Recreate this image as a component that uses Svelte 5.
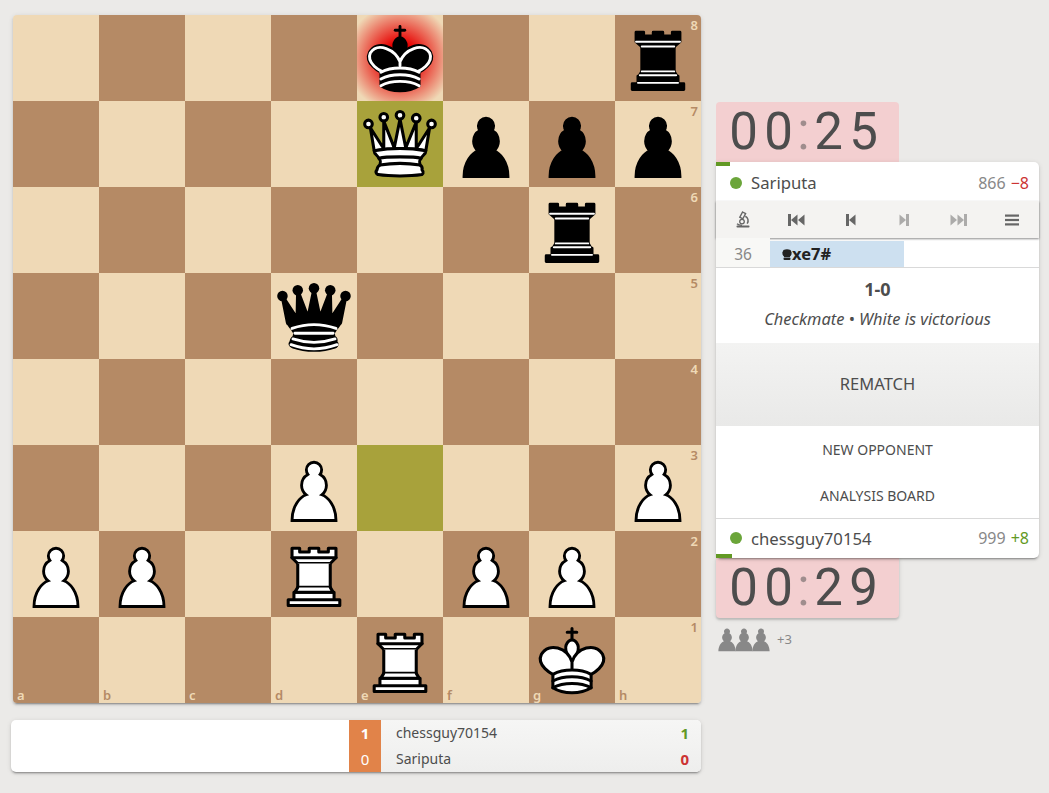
<script>
    const fen = "4k2r/4Qppp/6r1/3q4/8/3P3P/PP1R1PP1/4R1K1";
    const files = "abcdefgh";
    const lastMove = ["e7", "e3"];

    // expand the fen into a flat list of squares
    const squares = [];
    fen.split("/").forEach((row, r) => {
        let f = 0;
        for (const ch of row) {
            if (ch >= "1" && ch <= "8") {
                for (let i = 0; i < Number(ch); i++) {
                    squares.push({ r, f, name: files[f] + (8 - r), piece: null });
                    f++;
                }
            } else {
                squares.push({ r, f, name: files[f] + (8 - r), piece: ch });
                f++;
            }
        }
    });
</script>

{#snippet piece(p)}
    <svg class="piece" viewBox="0 0 45 45">
        {#if p === "P"}
            <path d="M22.5 9c-2.21 0-4 1.79-4 4 0 .89.29 1.71.78 2.38C17.33 16.5 16 18.59 16 21c0 2.03.94 3.84 2.41 5.03-3 1.06-7.41 5.55-7.41 13.47h23c0-7.92-4.41-12.41-7.41-13.47 1.47-1.19 2.41-3 2.41-5.03 0-2.41-1.33-4.5-3.28-5.62.49-.67.78-1.49.78-2.38 0-2.21-1.79-4-4-4z" fill="#fff" stroke="#000" stroke-width="1.5" stroke-linecap="round" />
        {:else if p === "p"}
            <path d="M22.5 9c-2.21 0-4 1.79-4 4 0 .89.29 1.71.78 2.38C17.33 16.5 16 18.59 16 21c0 2.03.94 3.84 2.41 5.03-3 1.06-7.41 5.55-7.41 13.47h23c0-7.92-4.41-12.41-7.41-13.47 1.47-1.19 2.41-3 2.41-5.03 0-2.41-1.33-4.5-3.28-5.62.49-.67.78-1.49.78-2.38 0-2.21-1.79-4-4-4z" fill="#000" stroke="#000" stroke-width="1.5" stroke-linecap="round" />
        {:else if p === "R"}
            <g fill="#fff" fill-rule="evenodd" stroke="#000" stroke-width="1.6" stroke-linecap="round" stroke-linejoin="round">
                <path d="M9 39h27v-3H9v3zM12 36v-4h21v4H12zM11 14V9h4v2h5V9h5v2h5V9h4v5" stroke-linecap="butt" />
                <path d="M34 14l-3 3H14l-3-3" />
                <path d="M31 17v12.5H14V17" stroke-linecap="butt" stroke-linejoin="miter" />
                <path d="M31 29.5l1.5 2.5h-20l1.5-2.5" />
                <path d="M11 14h23" fill="none" stroke-linejoin="miter" />
            </g>
        {:else if p === "r"}
            <g fill="#000" fill-rule="evenodd" stroke="#000" stroke-width="1.5" stroke-linecap="round" stroke-linejoin="round">
                <path d="M9 39h27v-3H9v3zM12.5 32l1.5-2.5h17l1.5 2.5h-20zM12 36v-4h21v4H12z" stroke-linecap="butt" />
                <path d="M14 29.5v-13h17v13H14z" stroke-linecap="butt" stroke-linejoin="miter" />
                <path d="M14 16.5L11 14h23l-3 2.5H14zM11 14V9h4v2h5V9h5v2h5V9h4v5H11z" stroke-linecap="butt" />
                <path d="M12 35.5h21M13 31.5h19M14 29.5h17M14 16.5h17M11 14h23" fill="none" stroke="#fff" stroke-width="1" stroke-linejoin="miter" />
            </g>
        {:else if p === "Q"}
            <g fill="#fff" fill-rule="evenodd" stroke="#000" stroke-width="1.6" stroke-linecap="round" stroke-linejoin="round">
                <path d="M8 12a2 2 0 1 1-4 0 2 2 0 1 1 4 0zM24.5 7.5a2 2 0 1 1-4 0 2 2 0 1 1 4 0zM41 12a2 2 0 1 1-4 0 2 2 0 1 1 4 0zM16 8.5a2 2 0 1 1-4 0 2 2 0 1 1 4 0zM33 9a2 2 0 1 1-4 0 2 2 0 1 1 4 0z" />
                <path d="M9 26c8.5-1.5 21-1.5 27 0l2-12-7 11V11l-5.5 13.5-3-15-3 15-5.5-14V25L7 14l2 12z" stroke-linecap="butt" />
                <path d="M9 26c0 2 1.5 2 2.5 4 1 1.5 1 1 .5 3.5-1.5 1-1.5 2.5-1.5 2.5-1.5 1.5.5 2.5.5 2.5 6.5 1 16.5 1 23 0 0 0 1.5-1 0-2.5 0 0 .5-1.5-1-2.5-.5-2.5-.5-2 .5-3.5 1-2 2.5-2 2.5-4-8.5-1.5-18.5-1.5-27 0z" stroke-linecap="butt" />
                <path d="M11.5 30c3.5-1 18.5-1 22 0M12 33.5c6-1 15-1 21 0" fill="none" />
            </g>
        {:else if p === "q"}
            <g fill-rule="evenodd" stroke="#000" stroke-width="1.5" stroke-linecap="round" stroke-linejoin="round">
                <g stroke="none">
                    <circle cx="6" cy="12" r="2.75" />
                    <circle cx="14" cy="9" r="2.75" />
                    <circle cx="22.5" cy="8" r="2.75" />
                    <circle cx="31" cy="9" r="2.75" />
                    <circle cx="39" cy="12" r="2.75" />
                </g>
                <path d="M9 26c8.5-1.5 21-1.5 27 0l2.5-12.5L31 25l-.3-14.1-5.2 13.6-3-14.5-3 14.5-5.2-13.6L14 25 6.5 13.5 9 26z" stroke-width="2.4" stroke-linecap="butt" />
                <path d="M9 26c0 2 1.5 2 2.5 4 1 1.5 1 1 .5 3.5-1.5 1-1.5 2.5-1.5 2.5-1.5 1.5.5 2.5.5 2.5 6.5 1 16.5 1 23 0 0 0 1.5-1 0-2.5 0 0 .5-1.5-1-2.5-.5-2.5-.5-2 .5-3.5 1-2 2.5-2 2.5-4-8.5-1.5-18.5-1.5-27 0z" stroke-linecap="butt" />
                <path d="M11 38.5a35 35 1 0 0 23 0" fill="none" stroke-linecap="butt" />
                <path d="M11 29a35 35 1 0 1 23 0M12.5 31.5h20M11.5 34.5a35 35 1 0 0 22 0M10.5 37.5a35 35 1 0 0 24 0" fill="none" stroke="#fff" />
            </g>
        {:else if p === "K"}
            <g fill="none" fill-rule="evenodd" stroke="#000" stroke-width="1.6" stroke-linecap="round" stroke-linejoin="round">
                <path d="M22.5 11.63V6M20 8h5" stroke-linejoin="miter" />
                <path d="M22.5 25s4.5-7.5 3-10.5c0 0-1-2.5-3-2.5s-3 2.5-3 2.5c-1.5 3 3 10.5 3 10.5" fill="#fff" stroke-linecap="butt" stroke-linejoin="miter" />
                <path d="M12.5 37c5.5 3.5 14.5 3.5 20 0v-7s9-4.5 6-10.5c-4-6.5-13.5-3.5-16 4V27v-3.5c-2.5-7.5-12-10.5-16-4-3 6 6 10.5 6 10.5v7" fill="#fff" />
                <path d="M12.5 30c5.5-3 14.5-3 20 0M12.5 33.5c5.5-3 14.5-3 20 0M12.5 37c5.5-3 14.5-3 20 0" />
            </g>
        {:else if p === "k"}
            <g fill="none" fill-rule="evenodd" stroke="#000" stroke-width="1.5" stroke-linecap="round" stroke-linejoin="round">
                <path d="M22.5 11.63V6" stroke-linejoin="miter" />
                <path d="M22.5 25s4.5-7.5 3-10.5c0 0-1-2.5-3-2.5s-3 2.5-3 2.5c-1.5 3 3 10.5 3 10.5" fill="#000" stroke-linecap="butt" stroke-linejoin="miter" />
                <path d="M12.5 37c5.5 3.5 14.5 3.5 20 0v-7s9-4.5 6-10.5c-4-6.5-13.5-3.5-16 4V27v-3.5c-2.5-7.5-12-10.5-16-4-3 6 6 10.5 6 10.5v7" fill="#000" />
                <path d="M20 8h5" stroke-linejoin="miter" />
                <path d="M32 29.5s8.5-4 6.03-9.65C34.15 14 25 18 22.5 24.5v2.1-2.1C20 18 10.85 14 6.97 19.85 4.5 25.5 13 29.5 13 29.5" stroke="#fff" />
                <path d="M12.5 30c5.5-3 14.5-3 20 0m-20 3.5c5.5-3 14.5-3 20 0m-20 3.5c5.5-3 14.5-3 20 0" stroke="#fff" />
            </g>
        {/if}
    </svg>
{/snippet}

{#snippet clock(m, s)}
    <span class="digit">{m[0]}</span><span class="digit">{m[1]}</span><span class="sep">:</span><span class="digit">{s[0]}</span><span class="digit">{s[1]}</span>
{/snippet}

<div class="page">
    <div class="left">
        <div class="board">
            {#each squares as sq}
                <div
                    class="square"
                    class:light={(sq.r + sq.f) % 2 === 0}
                    class:dark={(sq.r + sq.f) % 2 === 1}
                    class:last={lastMove.includes(sq.name)}
                    class:check={sq.name === "e8"}
                >
                    {#if sq.f === 7}
                        <span class="rank-label">{8 - sq.r}</span>
                    {/if}
                    {#if sq.r === 7}
                        <span class="file-label">{files[sq.f]}</span>
                    {/if}
                    {#if sq.piece}
                        {@render piece(sq.piece)}
                    {/if}
                </div>
            {/each}
        </div>

        <div class="score-bar">
            <div class="score-blank"></div>
            <div class="score-total">
                <span class="win">1</span>
                <span>0</span>
            </div>
            <div class="score-rows">
                <div class="score-row">
                    <span>chessguy70154</span>
                    <b class="good">1</b>
                </div>
                <div class="score-row">
                    <span>Sariputa</span>
                    <b class="bad">0</b>
                </div>
            </div>
        </div>
    </div>

    <div class="right">
        <div class="clock top-clock">
            {@render clock("00", "25")}
        </div>
        <div class="panel">
            <div class="bar bar-top"></div>
            <div class="player">
                <span class="dot"></span>
                <span class="name">Sariputa</span>
                <span class="rating">866</span>
                <span class="diff bad">−8</span>
            </div>

            <div class="controls">
                <button class="ctl" aria-label="analysis">
                    <svg width="14" height="17" viewBox="0 0 14 17" fill="none" stroke="#666">
                        <path d="M6.6 1L9.6 2.6 6.8 7.8 3.8 6.2z" stroke-width="1.4" />
                        <path d="M9.3 5.2C12 6.5 13 9.8 11.2 12.6" stroke-width="1.5" />
                        <circle cx="6" cy="10.6" r="2.3" stroke-width="1.3" />
                        <path d="M1 12.8c1 1 3 1.6 5 1.6" stroke-width="1.3" />
                        <rect x="0.5" y="14.5" width="13" height="2" rx=".8" fill="#666" stroke="none" />
                    </svg>
                </button>
                <button class="ctl" aria-label="first">
                    <svg width="17" height="14" viewBox="0 0 17 14" fill="#666">
                        <rect x="0" y="1" width="3" height="12" />
                        <path d="M9.5 1.5v11L3 7zM16.5 1.5v11L10 7z" />
                    </svg>
                </button>
                <button class="ctl" aria-label="previous">
                    <svg width="10" height="14" viewBox="0 0 10 14" fill="#666">
                        <rect x="0" y="1" width="3" height="12" />
                        <path d="M9.5 1.5v11L3 7z" />
                    </svg>
                </button>
                <button class="ctl off" aria-label="next">
                    <svg width="10" height="14" viewBox="0 0 10 14" fill="#666">
                        <path d="M.5 1.5v11L7 7z" />
                        <rect x="7" y="1" width="3" height="12" />
                    </svg>
                </button>
                <button class="ctl off" aria-label="last">
                    <svg width="17" height="14" viewBox="0 0 17 14" fill="#666">
                        <path d="M.5 1.5v11L7 7zM7.5 1.5v11L14 7z" />
                        <rect x="14" y="1" width="3" height="12" />
                    </svg>
                </button>
                <button class="ctl" aria-label="menu">
                    <svg width="14" height="12" viewBox="0 0 14 12" fill="#666">
                        <rect y="0.5" width="14" height="2.2" />
                        <rect y="4.9" width="14" height="2.2" />
                        <rect y="9.3" width="14" height="2.2" />
                    </svg>
                </button>
            </div>

            <div class="moves">
                <span class="index">36</span>
                <span class="move">
                    <svg class="move-icon" width="10" height="11" viewBox="0 0 10 11" fill="#222">
                        <path d="M1.5 1Q5-.6 8.500 1L9.700 3.500Q9.700 6.300 8 7.400V8H2v-.6Q.3 6.300.3 3.500z" />
                        <rect x="1.500" y="8.500" width="7" height="2.500" rx="1" />
                    </svg>
                    <span>xe7#</span>
                </span>
            </div>

            <div class="result">
                <strong>1-0</strong>
                <em>Checkmate • White is victorious</em>
            </div>

            <button class="rematch">REMATCH</button>
            <button class="follow">NEW OPPONENT</button>
            <button class="follow">ANALYSIS BOARD</button>

            <div class="player bottom">
                <span class="dot"></span>
                <span class="name">chessguy70154</span>
                <span class="rating">999</span>
                <span class="diff good">+8</span>
            </div>
            <div class="bar bar-bottom"></div>
        </div>
        <div class="clock bottom-clock">
            {@render clock("00", "29")}
        </div>
        <div class="captured">
            {#each [0, 1, 2] as i}
                <svg class="cap" viewBox="10.5 8.5 24 32">
                    <path d="M22.5 9c-2.21 0-4 1.79-4 4 0 .89.29 1.71.78 2.38C17.33 16.5 16 18.59 16 21c0 2.03.94 3.84 2.41 5.03-3 1.06-7.41 5.55-7.41 13.47h23c0-7.92-4.41-12.41-7.41-13.47 1.47-1.19 2.41-3 2.41-5.03 0-2.41-1.33-4.5-3.28-5.62.49-.67.78-1.49.78-2.38 0-2.21-1.79-4-4-4z" fill="#888" />
                </svg>
            {/each}
            <span class="plus">+3</span>
        </div>
    </div>
</div>

<style>
    :global(body) {
        margin: 0;
        background: #ebeae8;
        font-family: "Noto Sans", sans-serif;
        color: #4d4d4d;
    }

    .page {
        display: flex;
        align-items: flex-start;
        gap: 15px;
        height: 793px;
        box-sizing: border-box;
        padding: 15px 10px 0 13px;
        overflow: hidden;
    }

    /* board */
    .left {
        width: 688px;
        flex-shrink: 0;
    }

    .board {
        display: grid;
        grid-template-columns: repeat(8, 86px);
        grid-template-rows: repeat(8, 86px);
        border-radius: 4px;
        overflow: hidden;
        box-shadow:
            0 2px 2px 0 rgba(0, 0, 0, 0.14),
            0 3px 1px -2px rgba(0, 0, 0, 0.2),
            0 1px 5px 0 rgba(0, 0, 0, 0.12);
    }

    .square {
        position: relative;
        width: 86px;
        height: 86px;
    }

    .light {
        background: #efd9b6;
        color: #b58a65;
    }

    .dark {
        background: #b58a65;
        color: #efd9b6;
    }

    .last {
        background: #a8a23b;
    }

    .check {
        background: radial-gradient(
            ellipse at center,
            rgb(255, 0, 0) 0%,
            rgb(231, 0, 0) 25%,
            rgba(169, 0, 0, 0) 89%,
            rgba(158, 0, 0, 0) 100%
        ), #efd9b6;
    }

    .piece {
        display: block;
        width: 86px;
        height: 86px;
    }

    .rank-label {
        position: absolute;
        top: 2px;
        right: 3px;
        font-size: 13px;
        font-weight: 600;
        line-height: 16px;
    }

    .file-label {
        position: absolute;
        bottom: 0;
        left: 4px;
        font-size: 13px;
        font-weight: 600;
        line-height: 16px;
    }

    /* crosstable under the board */
    .score-bar {
        display: flex;
        width: 690px;
        height: 52px;
        margin: 17px 0 0 -2px;
        border-radius: 5px;
        overflow: hidden;
        background: #fff;
        box-shadow:
            0 2px 2px 0 rgba(0, 0, 0, 0.14),
            0 3px 1px -2px rgba(0, 0, 0, 0.2),
            0 1px 5px 0 rgba(0, 0, 0, 0.12);
    }

    .score-blank {
        width: 338px;
    }

    .score-total {
        display: flex;
        flex-direction: column;
        width: 32px;
        background: #e18349;
        color: #fff;
        font-size: 15px;
        text-align: center;
    }

    .score-total span {
        flex: 1;
        line-height: 26px;
    }

    .score-total .win {
        font-weight: 700;
    }

    .score-rows {
        flex: 1;
        background: linear-gradient(to bottom, #f6f6f5, #eeeeed);
        padding: 0 12px 0 15px;
    }

    .score-row {
        display: flex;
        justify-content: space-between;
        height: 26px;
        line-height: 26px;
        font-size: 14px;
    }

    .score-row b {
        font-size: 15px;
    }

    /* clocks */
    .right {
        width: 323px;
        margin-top: 87px;
        flex-shrink: 0;
    }

    .clock {
        width: 183px;
        height: 60px;
        box-sizing: border-box;
        padding-left: 10px;
        background: #f3cfd0;
        font-family: Roboto, sans-serif;
        font-size: 51px;
        line-height: 59px;
        color: #4d4d4d;
        white-space: nowrap;
    }

    .digit {
        display: inline-block;
        width: 35px;
        text-align: center;
    }

    .sep {
        display: inline-block;
        width: 15px;
        text-align: center;
        opacity: 0.5;
    }

    .top-clock {
        border-radius: 4px 4px 0 0;
    }

    .bottom-clock {
        border-radius: 0 0 4px 4px;
        box-shadow:
            0 2px 2px 0 rgba(0, 0, 0, 0.14),
            0 1px 5px 0 rgba(0, 0, 0, 0.12);
    }

    /* side panel */
    .panel {
        position: relative;
        height: 396px;
        display: flex;
        flex-direction: column;
        background: #fff;
        border-radius: 0 5px 5px 5px;
        box-shadow:
            0 2px 2px 0 rgba(0, 0, 0, 0.14),
            0 3px 1px -2px rgba(0, 0, 0, 0.2),
            0 1px 5px 0 rgba(0, 0, 0, 0.12);
    }

    .bar {
        position: absolute;
        left: 0;
        height: 4px;
        background: #629924;
    }

    .bar-top {
        top: 0;
        width: 14px;
    }

    .bar-bottom {
        bottom: 0;
        width: 16px;
    }

    .player {
        display: flex;
        align-items: center;
        height: 39px;
        flex-shrink: 0;
        padding: 2px 10px 0 14px;
        box-sizing: border-box;
        font-size: 16px;
    }

    .player .name {
        font-size: 16.7px;
    }

    .player.bottom {
        height: 40px;
        padding-top: 0;
        padding-bottom: 1px;
        border-top: 1px solid #d9d9d9;
    }

    .dot {
        width: 12px;
        height: 12px;
        border-radius: 50%;
        background: #6ba53a;
        margin-right: 9px;
    }

    .name {
        flex: 1;
    }

    .rating {
        color: #888;
        margin-right: 5px;
    }

    .bad {
        color: #cc3333;
    }

    .good {
        color: #629924;
    }

    .controls {
        position: relative;
        display: flex;
        height: 37px;
        flex-shrink: 0;
        background: #f4f3f1;
        box-shadow: 0 1px 2px rgba(0, 0, 0, 0.45);
    }

    .ctl {
        flex: 1;
        display: flex;
        align-items: center;
        justify-content: center;
        padding: 0;
        border: none;
        background: none;
    }

    .ctl.off {
        opacity: 0.5;
    }

    .moves {
        position: relative;
        display: flex;
        height: 30px;
        flex-shrink: 0;
        border-bottom: 1px solid #d9d9d9;
        box-sizing: border-box;
    }

    .index {
        width: 54px;
        background: #f8f8f6;
        color: #888;
        font-size: 15.5px;
        line-height: 32px;
        text-align: center;
    }

    .move {
        display: flex;
        align-items: center;
        width: 134px;
        margin-top: 3px;
        padding-left: 12px;
        box-sizing: border-box;
        background: #cde0f0;
        color: #222;
        font-size: 16.5px;
        font-weight: 700;
        line-height: 26px;
    }

    .move-icon {
        flex-shrink: 0;
    }

    .result {
        display: flex;
        flex-direction: column;
        align-items: center;
        height: 75px;
        flex-shrink: 0;
        box-sizing: border-box;
        padding-top: 9px;
    }

    .result strong {
        font-size: 18px;
        line-height: 24px;
    }

    .result em {
        font-size: 16.4px;
        line-height: 22px;
        margin-top: 7px;
    }

    button {
        font-family: inherit;
        color: #4d4d4d;
    }

    .rematch {
        height: 83px;
        flex-shrink: 0;
        padding: 0 0 2px;
        border: none;
        background: linear-gradient(to bottom, #f3f3f2, #e9e9e8);
        font-size: 16.5px;
    }

    .follow {
        height: 46px;
        flex-shrink: 0;
        border: none;
        background: none;
        font-size: 14px;
    }

    .captured {
        display: flex;
        align-items: center;
        margin: 10px 0 0 2px;
    }

    .cap {
        width: 18px;
        height: 24px;
        margin-right: -1px;
    }

    .plus {
        margin: 0 0 3px 8px;
        font-size: 13px;
        color: #888;
    }
</style>
